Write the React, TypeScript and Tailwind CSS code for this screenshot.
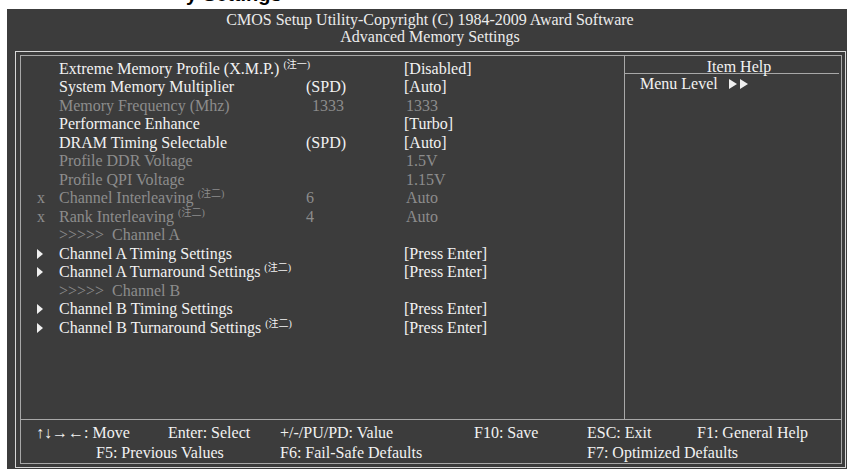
import { FC } from "react";

type Row = {
  mark?: "x" | "tri";
  label: string;
  note?: string;
  mid?: string;
  value?: string;
  dim?: boolean;
};

const rows: Row[] = [
  { label: "Extreme Memory Profile (X.M.P.)", note: "(注一)", value: "[Disabled]" },
  { label: "System Memory Multiplier", mid: "(SPD)", value: "[Auto]" },
  { label: "Memory Frequency (Mhz)", mid: "1333", value: "1333", dim: true },
  { label: "Performance Enhance", value: "[Turbo]" },
  { label: "DRAM Timing Selectable", mid: "(SPD)", value: "[Auto]" },
  { label: "Profile DDR Voltage", value: "1.5V", dim: true },
  { label: "Profile QPI Voltage", value: "1.15V", dim: true },
  { mark: "x", label: "Channel Interleaving", note: "(注二)", mid: "6", value: "Auto", dim: true },
  { mark: "x", label: "Rank Interleaving", note: "(注二)", mid: "4", value: "Auto", dim: true },
  { label: ">>>>>  Channel A", dim: true },
  { mark: "tri", label: "Channel A Timing Settings", value: "[Press Enter]" },
  { mark: "tri", label: "Channel A Turnaround Settings", note: "(注二)", value: "[Press Enter]" },
  { label: ">>>>>  Channel B", dim: true },
  { mark: "tri", label: "Channel B Timing Settings", value: "[Press Enter]" },
  { mark: "tri", label: "Channel B Turnaround Settings", note: "(注二)", value: "[Press Enter]" },
];

const serif = "font-['Liberation_Serif','Times_New_Roman',serif]";

const Note: FC<{ text: string }> = ({ text }) => (
  <span className="relative -top-[6px] ml-[4px] text-[10px] leading-none font-['Liberation_Serif','Noto_Sans_CJK_SC',serif]">
    {text}
  </span>
);

const Tri = () => (
  <svg width="6" height="10" viewBox="0 0 6 10" className="inline-block">
    <path d="M0 0 L6 5 L0 10 Z" fill="#f0f0f0" />
  </svg>
);

const App: FC = () => {
  return (
    <div className={`w-[847px] h-[469px] bg-white flex flex-col ${serif}`}>
      <div className="h-[9px] overflow-hidden pl-[186px]">
        <div className="-mt-[16px] text-[20px] leading-[20px] font-bold text-black font-['Liberation_Sans',Arial,sans-serif]">
          y Settings
        </div>
      </div>

      <div className="ml-[7px] flex-1 bg-[#3c3c3c] flex flex-col">
        <div className="h-[42px] pt-[2px] pl-[6px] text-center text-[16px] leading-[17px] text-[#ececec]">
          <div>CMOS Setup Utility-Copyright (C) 1984-2009 Award Software</div>
          <div>Advanced Memory Settings</div>
        </div>

        <div className="flex-1 ml-[8px] mr-[1px] mb-[1px] border border-[#d8d8d8] pt-[3px] pb-[3px] pl-[4px] pr-[3px] flex">
          <div className="flex-1 border border-[#a8a8a8] flex flex-col">
            <div className="flex-1 flex">
              <div className="w-[603px] pt-[4px] text-[16px] leading-[18px]">
                {rows.map((r, i) => (
                  <div
                    key={i}
                    className={`grid grid-cols-[22px_247px_98px_1fr] pl-[16px] whitespace-pre ${
                      i % 2 === 1 ? "pb-[1px]" : ""
                    } ${r.dim ? "text-[#8c8c8c]" : "text-[#f2f2f2]"}`}
                  >
                    <div className="flex items-center">
                      {r.mark === "x" && <span className="text-[#8c8c8c]">x</span>}
                      {r.mark === "tri" && <Tri />}
                    </div>
                    <div>
                      {r.label}
                      {r.note && <Note text={r.note} />}
                    </div>
                    <div className={r.mid === "1333" ? "pl-[6px]" : ""}>{r.mid}</div>
                    <div className={r.dim ? "pl-[2px]" : ""}>{r.value}</div>
                  </div>
                ))}
              </div>

              <div className="flex-1 border-l border-[#a8a8a8] text-[16px] text-[#f2f2f2]">
                <div className="mr-[2px] border-b border-[#a8a8a8] h-[18px] pt-[2px] leading-[18px] text-center pl-[14px]">
                  Item Help
                </div>
                <div className="pl-[15px] pt-[1px] leading-[18px] flex items-center">
                  Menu Level
                  <svg width="23" height="10" viewBox="0 0 23 10" className="ml-[11px]">
                    <path d="M0 0 L8 5 L0 10 Z M11 0 L19 5 L11 10 Z" fill="#f0f0f0" />
                  </svg>
                </div>
              </div>
            </div>

            <div className="h-[44px] border-t border-[#a8a8a8] pt-[3px] pl-[15px] text-[16px] leading-[20px] text-[#f2f2f2] grid grid-cols-[132px_112px_194px_113px_110px_1fr]">
              <div>↑↓→←: Move</div>
              <div>Enter: Select</div>
              <div>+/-/PU/PD: Value</div>
              <div>F10: Save</div>
              <div>ESC: Exit</div>
              <div>F1: General Help</div>
              <div className="col-span-2 pl-[60px]">F5: Previous Values</div>
              <div className="col-span-2">F6: Fail-Safe Defaults</div>
              <div className="col-span-2">F7: Optimized Defaults</div>
            </div>
          </div>
        </div>
      </div>
    </div>
  );
};

export default App;
